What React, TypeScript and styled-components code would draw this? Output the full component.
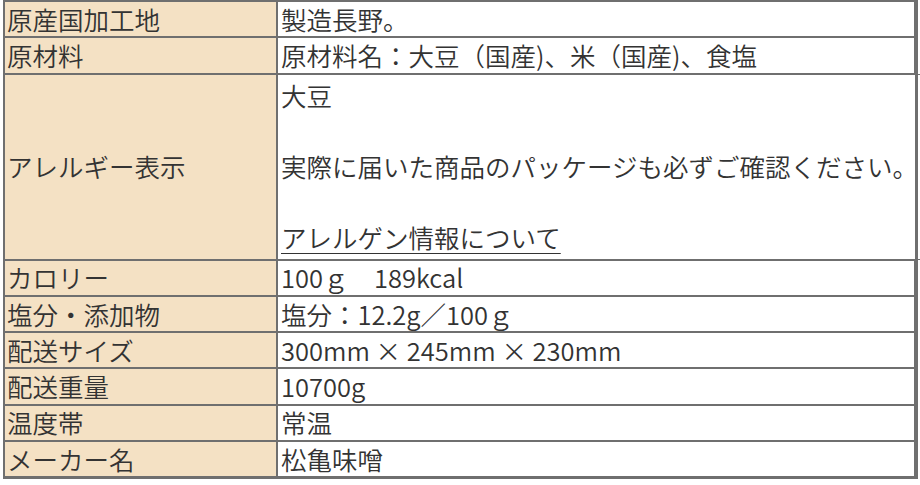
import type { ReactNode } from 'react';
import styled, { createGlobalStyle } from 'styled-components';

const GlobalStyle = createGlobalStyle`
  body {
    margin: 0;
    background: #fff;
    font-family: "Noto Sans CJK JP", "Noto Sans", sans-serif;
    color: #333;
  }
`;

const $Page = styled.div`
  padding: 0 2px 0 3px;
`;
const $Table = styled.div`
  box-sizing: border-box;
  width: 915px;
  border: 1px solid #6f6f6f;
  border-right-width: 3px;
  border-bottom-width: 2px;
  font-size: 25.5px;
  font-weight: 350;
  line-height: 30px;
`;
const $Row = styled.div<{ $height: number }>`
  display: grid;
  grid-template-columns: 273px 1fr;
  grid-template-rows: 100%;
  height: ${(p) => p.$height}px;
`;
const $Label = styled.div`
  display: flex;
  align-items: center;
  min-height: 0;
  padding: 0 0 1px 2px;
  background: #f4e1c4;
  border: 1px solid #6f6f6f;
  white-space: nowrap;
`;
const $Value = styled.div<{ $tall?: boolean }>`
  display: flex;
  flex-direction: column;
  justify-content: ${(p) => (p.$tall ? 'flex-start' : 'center')};
  min-height: 0;
  padding: ${(p) => (p.$tall ? '2px 3px 0' : '0 3px 1px')};
  line-height: ${(p) => (p.$tall ? '35.5px' : '30px')};
  border: 1px solid #6f6f6f;
  white-space: nowrap;
`;
const $Line = styled.div`
  min-height: 35.5px;
`;
const $Link = styled.a`
  align-self: flex-start;
  color: #333;
  text-decoration: underline;
  text-decoration-thickness: 1px;
  text-underline-offset: 5px;
`;

export default function App() {
  const rows: { label: string; value: ReactNode; tall?: boolean }[] = [
    { label: '原産国加工地', value: '製造長野。' },
    { label: '原材料', value: '原材料名：大豆（国産)、米（国産)、食塩' },
    {
      label: 'アレルギー表示',
      tall: true,
      value: (
        <>
          <$Line>大豆</$Line>
          <$Line />
          <$Line>実際に届いた商品のパッケージも必ずご確認ください。</$Line>
          <$Line />
          <$Link href="#">アレルゲン情報について</$Link>
        </>
      ),
    },
    { label: 'カロリー', value: '100ｇ　189kcal' },
    { label: '塩分・添加物', value: '塩分：12.2g／100ｇ' },
    { label: '配送サイズ', value: '300mm × 245mm × 230mm' },
    { label: '配送重量', value: '10700g' },
    { label: '温度帯', value: '常温' },
    { label: 'メーカー名', value: '松亀味噌' },
  ];

  return (
    <$Page>
      <GlobalStyle />
      <$Table>
        {rows.map((row) => (
          <$Row key={row.label} $height={row.tall ? 186 : 36.3}>
            <$Label>{row.label}</$Label>
            <$Value $tall={row.tall}>{row.value}</$Value>
          </$Row>
        ))}
      </$Table>
    </$Page>
  );
}
